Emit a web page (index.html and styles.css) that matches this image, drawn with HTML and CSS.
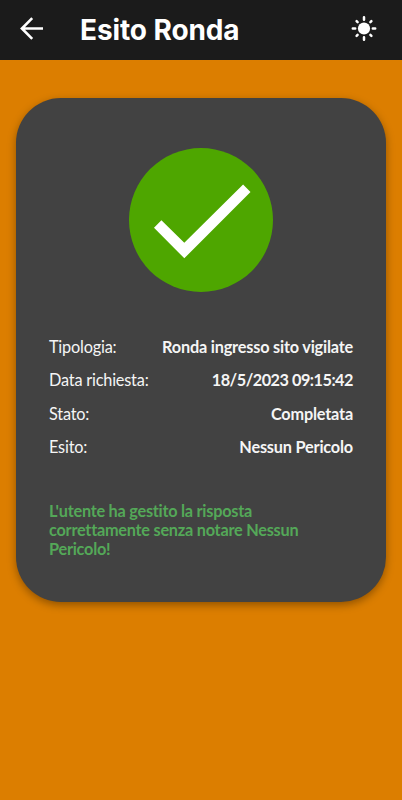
FILE: index.html
```html
<!DOCTYPE html>
<html lang="it">
<head>
  <meta charset="UTF-8">
  <meta name="viewport" content="width=device-width, initial-scale=1.0">
  <title>Esito Ronda</title>
  <link rel="stylesheet" href="styles.css">
</head>
<body>
  <header class="app-bar">
    <button class="icon-btn" id="backBtn" aria-label="Indietro">
      <svg width="32" height="32" viewBox="0 0 32 32" fill="none" stroke="currentColor" stroke-width="2.6">
        <path d="M28 16.5H7.5M17.2 6.2L6.9 16.5l10.3 10.3"/>
      </svg>
    </button>
    <h1 class="app-title">Esito Ronda</h1>
    <button class="icon-btn" id="themeBtn" aria-label="Tema">
      <svg width="32" height="32" viewBox="0 0 32 32" stroke="currentColor" stroke-width="2.5" stroke-linecap="round">
        <circle cx="16" cy="16.5" r="6.1" fill="currentColor" stroke="none"/>
        <path d="M16 5.3v2.4M16 25.3v2.4M4.8 16.5h2.4M24.8 16.5h2.4M8.6 9.1l1 1M22.4 22.9l1 1M23.4 9.1l-1 1M9.6 22.9l-1 1"/>
      </svg>
    </button>
  </header>

  <main class="card">
    <svg class="status-icon" viewBox="0 0 144 144">
      <circle cx="72" cy="72" r="72" fill="#4ea600"/>
      <path d="M25 79.7l7.4-7.5 22.9 22.6 58.8-58.4 7.4 7.6-66.2 66.3z" fill="#fff"/>
    </svg>

    <dl class="details">
      <div class="row">
        <dt>Tipologia:</dt>
        <dd>Ronda ingresso sito vigilate</dd>
      </div>
      <div class="row">
        <dt>Data richiesta:</dt>
        <dd class="date">18/5/2023 09:15:42</dd>
      </div>
      <div class="row">
        <dt>Stato:</dt>
        <dd>Completata</dd>
      </div>
      <div class="row">
        <dt>Esito:</dt>
        <dd>Nessun Pericolo</dd>
      </div>
    </dl>

    <p class="message">L'utente ha gestito la risposta correttamente senza notare Nessun Pericolo!</p>
  </main>
</body>
</html>
```

FILE: styles.css
```css
* {
  margin: 0;
  padding: 0;
  box-sizing: border-box;
}

body {
  font-family: Lato, sans-serif;
  background: #dc7e00;
  color: #f5f5f5;
  min-height: 100vh;
}

.app-bar {
  display: flex;
  align-items: center;
  height: 60px;
  padding: 0 22px 4px 15px;
  background: #1b1b1b;
  color: #fff;
}

.icon-btn {
  width: 32px;
  height: 32px;
  border: none;
  background: none;
  color: inherit;
  cursor: pointer;
}

.icon-btn svg {
  display: block;
}

.app-title {
  flex: 1;
  margin-left: 33px;
  font-family: Inter, sans-serif;
  font-size: 28px;
  font-weight: 700;
  line-height: 34px;
  letter-spacing: -0.1px;
  padding-top: 3px;
}

.card {
  height: 504px;
  margin: 38px 16px 0;
  padding: 50px 33px 0;
  background: #424242;
  border-radius: 45px;
  box-shadow: 0 3px 8px rgba(0, 0, 0, 0.35);
}

.status-icon {
  display: block;
  width: 144px;
  height: 144px;
  margin: 0 auto 39px;
}

.row {
  display: flex;
  justify-content: space-between;
  height: 33.4px;
  font-size: 16.3px;
  line-height: 32px;
  letter-spacing: -0.2px;
}

.row dd {
  font-weight: 700;
}

.row .date {
  letter-spacing: -0.5px;
}

.message {
  width: 270px;
  margin-top: 36px;
  font-size: 16.3px;
  font-weight: 700;
  line-height: 19px;
  letter-spacing: -0.25px;
  color: #54a858;
}
```
